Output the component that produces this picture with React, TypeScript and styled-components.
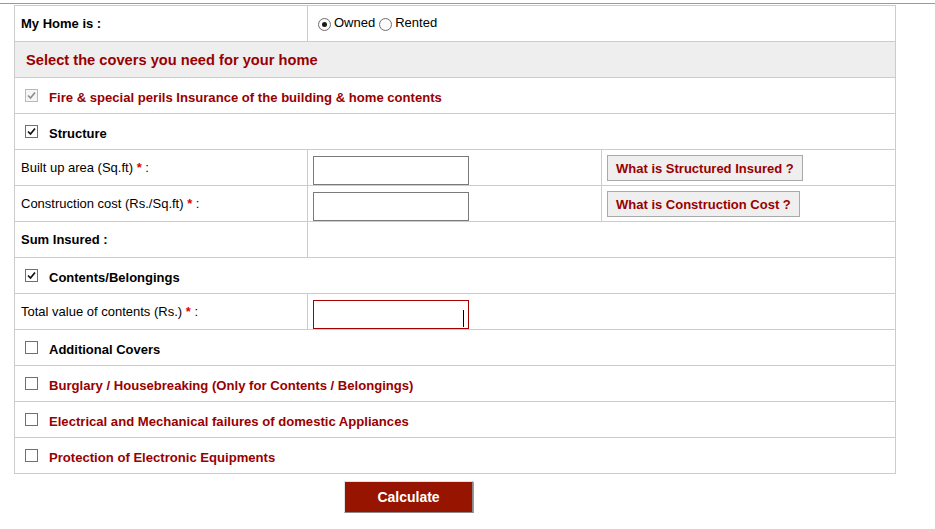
import React from 'react';
import styled, { createGlobalStyle } from 'styled-components';

const GlobalStyle = createGlobalStyle`
	html, body {
		margin: 0;
		padding: 0;
		background: #fff;
	}
	body {
		font-family: "Liberation Sans", Arial, sans-serif;
		font-size: 13px;
		color: #000;
	}
`;

const RED = '#990000';

const TopRule = styled.div`
	margin-top: 3px;
	height: 1px;
	background: #9a9a9a;
`;

const Page = styled.div`
	padding: 1px 0 0 14px;
`;

const FormTable = styled.table`
	border-collapse: collapse;
	table-layout: fixed;
	width: 881px;

	td {
		border: 1px solid #cccccc;
		height: 36px;
		padding: 0 6px;
		vertical-align: middle;
		box-sizing: border-box;
	}
`;

const Row = styled.tr<{ $shade?: boolean }>`
	background: ${(p) => (p.$shade ? '#eeeeee' : '#ffffff')};
`;

const FieldCell = styled.td`
	&& {
		padding-left: 5px;
	}
`;

const Label = styled.span<{ $bold?: boolean }>`
	font-weight: ${(p) => (p.$bold ? 'bold' : 'normal')};
	font-size: 13px;
`;

const Star = styled.span`
	color: #e00000;
	font-weight: bold;
`;

const Heading = styled.div`
	color: ${RED};
	font-weight: bold;
	font-size: 11pt;
	padding-left: 5px;
`;

const RadioGroup = styled.div`
	display: flex;
	align-items: center;
	padding-left: 4px;
	margin-top: -2px;
`;

const RadioOption = styled.label`
	display: flex;
	align-items: center;
	gap: 3px;
	margin-right: 4px;
	font-size: 13px;
`;

const RadioDot = styled.span<{ $on?: boolean }>`
	width: 11px;
	height: 11px;
	border-radius: 50%;
	border: 1px solid #6e6e6e;
	background: #fbfbfb;
	position: relative;
	margin-top: 4px;

	&::after {
		content: '';
		display: ${(p) => (p.$on ? 'block' : 'none')};
		position: absolute;
		left: 3px;
		top: 3px;
		width: 5px;
		height: 5px;
		border-radius: 50%;
		background: #1a1a1a;
	}
`;

const CheckLine = styled.div<{ $tone: 'red' | 'black' }>`
	display: flex;
	align-items: center;
	gap: 11px;
	padding-left: 4px;
	font-weight: bold;
	font-size: ${(p) => (p.$tone === 'red' ? '13.1px' : '13px')};
	color: ${(p) => (p.$tone === 'red' ? RED : '#000')};
`;

const CheckText = styled.span`
	padding-top: 3px;
`;

const Box = styled.span<{ $disabled?: boolean }>`
	width: 11px;
	height: 11px;
	border: 1px solid ${(p) => (p.$disabled ? '#b9b9b9' : '#707070')};
	background: ${(p) => (p.$disabled ? '#f6f6f6' : '#fff')};
	display: flex;
	align-items: center;
	justify-content: center;
	flex: none;
`;

const TextField = styled.input<{ $error?: boolean }>`
	width: 156px;
	height: 29px;
	box-sizing: border-box;
	border: 1px solid ${(p) => (p.$error ? '#a30000' : '#7a7a7a')};
	background: #fff;
	margin: 6px 0 0 0;
	padding: 0 4px;
	font: inherit;
	display: block;
	outline: none;
`;

const FieldWrap = styled.div`
	position: relative;
	width: 156px;
`;

const Caret = styled.span`
	position: absolute;
	right: 5px;
	top: 10px;
	width: 1px;
	height: 17px;
	background: #000;
`;

const HelpButton = styled.button`
	display: block;
	height: 26px;
	margin-top: 1px;
	padding: 0 8px;
	background: #efefef;
	border: 1px solid #a9a9a9;
	color: ${RED};
	font-family: "Liberation Sans", Arial, sans-serif;
	font-weight: bold;
	font-size: 13px;
	cursor: pointer;
`;

const Footer = styled.div`
	padding: 7px 0 0 330px;
`;

const CalcButton = styled.button`
	width: 129px;
	height: 32px;
	background: #961400;
	color: #fff;
	font-family: "Liberation Sans", Arial, sans-serif;
	font-weight: bold;
	font-size: 14px;
	border: 1px solid;
	border-color: #e2e2e2 #8a8a8a #8a8a8a #e2e2e2;
	box-shadow: 1px 1px 0 #9a9a9a;
	cursor: pointer;
`;

function Check({ disabled }: { disabled?: boolean }) {
	return (
		<svg width="9" height="9" viewBox="0 0 9 9">
			<polyline
				points="1,4.5 3.5,7 8,1.5"
				fill="none"
				stroke={disabled ? '#8f8f8f' : '#111'}
				strokeWidth="1.7"
			/>
		</svg>
	);
}

function CheckRow({ text, checked, disabled, tone }: { text: string; checked?: boolean; disabled?: boolean; tone: 'red' | 'black' }) {
	return (
		<Row>
			<td colSpan={3}>
				<CheckLine $tone={tone}>
					<Box $disabled={disabled}>{checked && <Check disabled={disabled} />}</Box>
					<CheckText>{text}</CheckText>
				</CheckLine>
			</td>
		</Row>
	);
}

function App() {
	return (
		<>
			<GlobalStyle />
			<TopRule />
			<Page>
				<FormTable>
					<colgroup>
						<col style={{ width: 293 }} />
						<col style={{ width: 294 }} />
						<col style={{ width: 294 }} />
					</colgroup>
					<tbody>
						<Row>
							<td>
								<Label $bold>My Home is :</Label>
							</td>
							<td colSpan={2}>
								<RadioGroup>
									<RadioOption>
										<RadioDot $on />
										Owned
									</RadioOption>
									<RadioOption>
										<RadioDot />
										Rented
									</RadioOption>
								</RadioGroup>
							</td>
						</Row>
						<Row $shade>
							<td colSpan={3}>
								<Heading>Select the covers you need for your home</Heading>
							</td>
						</Row>
						<CheckRow text="Fire & special perils Insurance of the building & home contents" checked disabled tone="red" />
						<CheckRow text="Structure" checked tone="black" />
						<Row>
							<td>
								<Label>
									Built up area (Sq.ft) <Star>*</Star> :
								</Label>
							</td>
							<FieldCell>
								<TextField />
							</FieldCell>
							<FieldCell>
								<HelpButton>What is Structured Insured ?</HelpButton>
							</FieldCell>
						</Row>
						<Row>
							<td>
								<Label>
									Construction cost (Rs./Sq.ft) <Star>*</Star> :
								</Label>
							</td>
							<FieldCell>
								<TextField />
							</FieldCell>
							<FieldCell>
								<HelpButton>What is Construction Cost ?</HelpButton>
							</FieldCell>
						</Row>
						<Row>
							<td>
								<Label $bold>Sum Insured :</Label>
							</td>
							<td colSpan={2}></td>
						</Row>
						<CheckRow text="Contents/Belongings" checked tone="black" />
						<Row>
							<td>
								<Label>
									Total value of contents (Rs.) <Star>*</Star> :
								</Label>
							</td>
							<FieldCell colSpan={2}>
								<FieldWrap>
									<TextField $error />
									<Caret />
								</FieldWrap>
							</FieldCell>
						</Row>
						<CheckRow text="Additional Covers" tone="black" />
						<CheckRow text="Burglary / Housebreaking (Only for Contents / Belongings)" tone="red" />
						<CheckRow text="Electrical and Mechanical failures of domestic Appliances" tone="red" />
						<CheckRow text="Protection of Electronic Equipments" tone="red" />
					</tbody>
				</FormTable>
				<Footer>
					<CalcButton>Calculate</CalcButton>
				</Footer>
			</Page>
		</>
	);
}

export default App;
